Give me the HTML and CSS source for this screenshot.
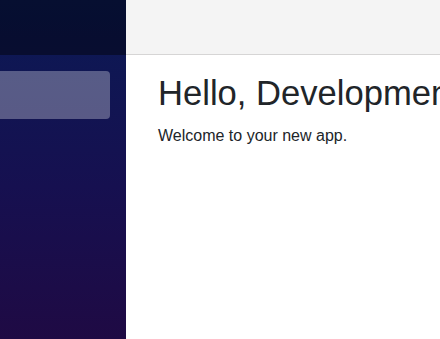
FILE: index.html
```html
<!DOCTYPE html>
<html lang="en">
<head>
    <meta charset="UTF-8">
    <meta name="viewport" content="width=device-width, initial-scale=1.0">
    <title>Home</title>
    <link rel="stylesheet" href="styles.css">
</head>
<body>
    <div class="page">
        <div class="sidebar">
            <div class="brand"></div>
            <div class="nav">
                <div class="nav-item active"></div>
            </div>
        </div>
        <div class="main">
            <div class="top-row"></div>
            <div class="content">
                <h1>Hello, Development</h1>
                <p>Welcome to your new app.</p>
            </div>
        </div>
    </div>
</body>
</html>
```

FILE: styles.css
```css
html, body {
    margin: 0;
    padding: 0;
    height: 100%;
    overflow: hidden;
}
body {
    font-family: "Liberation Sans", Arial, sans-serif;
    color: #212529;
}
.page {
    display: flex;
    height: 100%;
}
.sidebar {
    width: 126px;
    flex-shrink: 0;
    background-image: linear-gradient(180deg, #0b1a55 0%, #161050 55%, #1f0a44 100%);
    overflow: hidden;
}
.sidebar .brand {
    height: 55px;
    background-color: rgba(0, 0, 0, 0.42);
}
.sidebar .nav {
    padding: 16px 16px 0 0;
}
.sidebar .nav-item {
    height: 48px;
    margin-left: -10px;
    border-radius: 4px;
}
.sidebar .nav-item.active {
    background-color: rgba(255, 255, 255, 0.3);
}
.main {
    flex: 1;
    min-width: 0;
    overflow: hidden;
}
.main .top-row {
    height: 54px;
    background-color: #f4f4f4;
    border-bottom: 1px solid #d6d5d5;
}
.content {
    padding: 18px 0 0 32px;
    white-space: nowrap;
}
.content h1 {
    margin: 0 0 9px;
    font-size: 34.6px;
    font-weight: 400;
    line-height: 1.2;
}
.content p {
    margin: 0;
    font-size: 16px;
    line-height: 1.5;
}
```
